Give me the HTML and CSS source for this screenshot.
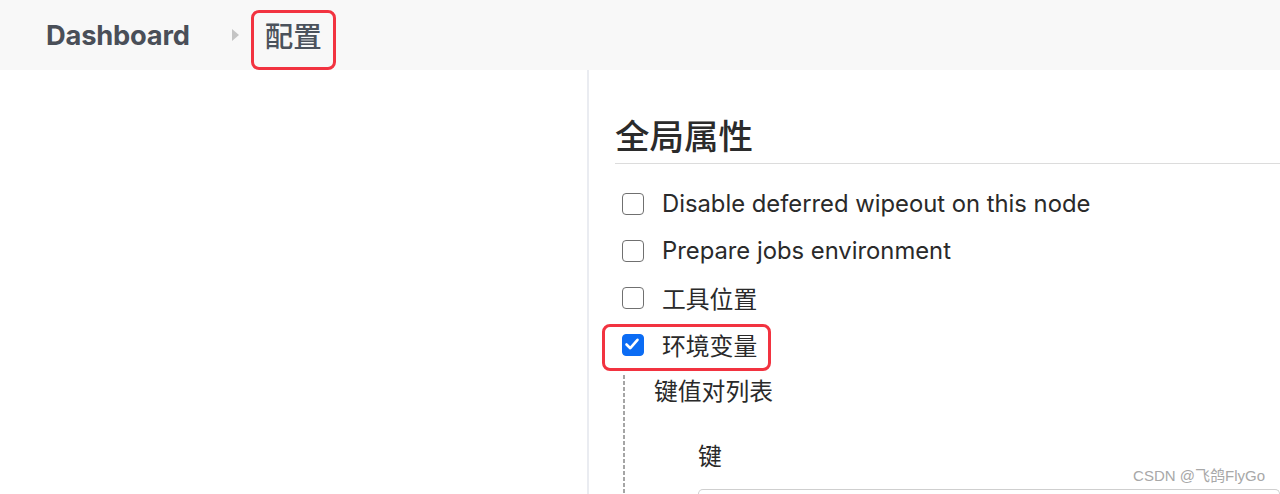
FILE: index.html
```html
<!DOCTYPE html>
<html lang="zh-CN">
<head>
<meta charset="utf-8">
<title>配置</title>
<link rel="stylesheet" href="styles.css">
</head>
<body>
<header class="topbar">
  <a class="crumb crumb-home" href="#">Dashboard</a>
  <span class="crumb-sep"></span>
  <span class="crumb crumb-current">配置</span>
</header>
<div class="page">
  <aside class="sidebar"></aside>
  <main class="content">
    <h2 class="section-title">全局属性</h2>
    <div class="options">
      <label class="option"><span class="box"></span><span class="option-label">Disable deferred wipeout on this node</span></label>
      <label class="option"><span class="box"></span><span class="option-label">Prepare jobs environment</span></label>
      <label class="option"><span class="box"></span><span class="option-label">工具位置</span></label>
      <label class="option option-marked"><span class="box box-checked"><svg viewBox="0 0 22 22" width="22" height="22"><path d="M5.5 11.5 L9.3 15.2 L16.5 6.8" fill="none" stroke="#fff" stroke-width="2.6" stroke-linecap="round" stroke-linejoin="round"/></svg></span><span class="option-label">环境变量</span></label>
    </div>
    <div class="nested">
      <div class="nested-title">键值对列表</div>
      <div class="field">
        <div class="field-label">键</div>
        <div class="field-input"></div>
      </div>
    </div>
  </main>
</div>
<div class="watermark">CSDN @飞鸽FlyGo</div>
</body>
</html>
```
FILE: styles.css
```css
*, *::before, *::after { box-sizing: border-box; }
html, body { margin: 0; padding: 0; }
body {
  width: 1280px;
  height: 494px;
  overflow: hidden;
  background: #fff;
  font-family: Inter, "Liberation Sans", "Noto Sans CJK SC", sans-serif;
  color: #333;
  position: relative;
}
.topbar {
  height: 70px;
  background: #f8f8f8;
  display: flex;
  align-items: center;
  padding-left: 46px;
}
.crumb {
  color: #4a4f58;
  text-decoration: none;
}
.crumb-home {
  font-size: 27.3px;
  font-weight: 700;
  letter-spacing: -0.2px;
}
.crumb-sep {
  width: 0;
  height: 0;
  border-top: 6.5px solid transparent;
  border-bottom: 6.5px solid transparent;
  border-left: 7px solid #c4c4c4;
  margin-left: 42px;
  margin-right: 12px;
}
.crumb-current {
  font-size: 28.5px;
  font-weight: 500;
  color: #4b525c;
  border: 3px solid #f23340;
  border-radius: 8px;
  width: 85px;
  height: 60px;
  margin-top: 10px;
  margin-bottom: 1px;
  display: flex;
  align-items: center;
  justify-content: center;
  padding-bottom: 10px;
}
.page {
  display: flex;
  height: 424px;
  overflow: hidden;
}
.sidebar {
  width: 589px;
  flex: none;
  border-right: 2px solid #eaecf1;
}
.content {
  flex: 1;
  padding-left: 26px;
  padding-top: 44px;
}
.section-title {
  margin: 0;
  font-size: 34.5px;
  font-weight: 500;
  color: #2b2b2b;
  line-height: 46px;
  padding-bottom: 3px;
  border-bottom: 1px solid #dcdcdc;
}
.options {
  padding-left: 7px;
  padding-top: 29px;
  display: flex;
  flex-direction: column;
  gap: 26px;
}
.option {
  display: flex;
  align-items: center;
  height: 21px;
  position: relative;
}
.box {
  width: 22px;
  height: 22px;
  border: 1.6px solid #707070;
  border-radius: 4px;
  flex: none;
  background: #fff;
  display: flex;
}
.box-checked {
  background: #0b6cf4;
  border-color: #0b6cf4;
}
.box-checked svg { margin: -1.6px; }
.option-label {
  margin-left: 18px;
  font-size: 23.8px;
  color: #2a2a2a;
  white-space: nowrap;
}
.option-marked::after {
  content: "";
  position: absolute;
  left: -20px;
  top: -10px;
  width: 169px;
  height: 47px;
  border: 3px solid #f23340;
  border-radius: 8px;
}
.nested {
  margin-left: 8px;
  margin-top: 20px;
  padding-left: 31px;
  background: repeating-linear-gradient(to bottom, #a5a5a5 0 4px, transparent 4px 6px) left top / 2px 100% no-repeat;
  height: 121px;
}
.nested-title {
  font-size: 23.8px;
  color: #2a2a2a;
  line-height: 30px;
  padding-top: 2px;
}
.field {
  padding-left: 44px;
  padding-top: 35px;
}
.field-label {
  font-size: 23.8px;
  color: #2a2a2a;
  line-height: 30px;
}
.field-input {
  margin-top: 17px;
  height: 6px;
  border: 1px solid #cfcfcf;
  border-bottom: none;
  border-radius: 5px 5px 0 0;
}
.watermark {
  position: absolute;
  right: 15px;
  bottom: 9px;
  font-family: "Liberation Sans", "Noto Sans CJK SC", sans-serif;
  font-size: 15px;
  color: #a8a8a8;
  text-shadow: 0 0 2px #fff;
}
```
